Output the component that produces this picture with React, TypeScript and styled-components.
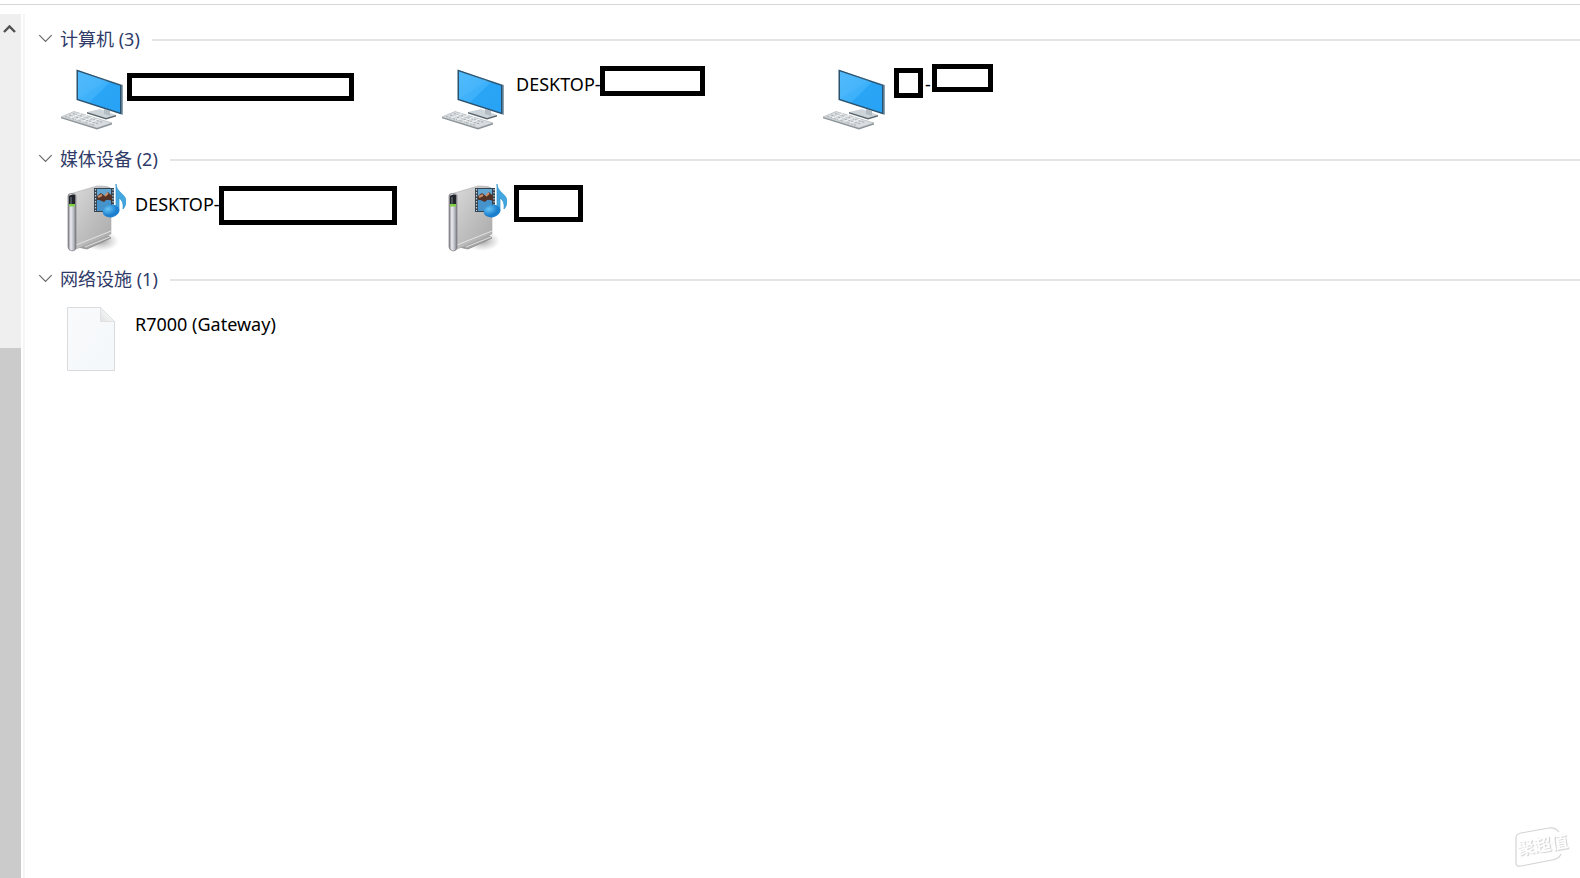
import React, { useState } from "react";
import styled, { createGlobalStyle } from "styled-components";

const GlobalStyle = createGlobalStyle`
  * { box-sizing: border-box; }
  body {
    margin: 0;
    background: #ffffff;
    color: #000000;
    font-family: "Noto Sans", "Noto Sans CJK SC", sans-serif;
    font-size: 18px;
    line-height: 24px;
  }
`;

const Page = styled.div`
  display: flex;
  flex-direction: column;
  min-height: 100vh;
`;

const TopRule = styled.div`
  height: 14px;
  padding-top: 4px;
  &::before {
    content: "";
    display: block;
    height: 1px;
    background: #d6d6d6;
  }
`;

const Body = styled.div`
  display: flex;
  flex: 1;
`;

const ScrollBar = styled.div`
  display: flex;
  flex-direction: column;
  width: 21px;
  background: #efefef;
`;

const ScrollButton = styled.button`
  display: flex;
  align-items: center;
  height: 30px;
  padding: 0 0 0 3px;
  border: 0;
  background: transparent;
`;

const TrackSpace = styled.div`
  flex: 304;
`;

const Thumb = styled.div`
  flex: 530;
  background: #cbcbcb;
`;

const Divider = styled.div`
  width: 2px;
  margin-left: 2px;
  background: #f5f5f5;
`;

const Content = styled.main`
  flex: 1;
  min-width: 0;
  padding: 13px 0 0 13px;
`;

const Group = styled.section`
  min-height: 120px;
`;

const GroupTitle = styled.h2`
  display: flex;
  align-items: center;
  gap: 12px;
  margin: 0;
  font-size: 18px;
  font-weight: 400;
  &::after {
    content: "";
    flex: 1;
    height: 2px;
    margin-top: 2px;
    background: #e5e5e5;
  }
`;

const GroupToggle = styled.button`
  display: flex;
  align-items: center;
  gap: 7px;
  padding: 0;
  border: 0;
  background: transparent;
  color: #2f3b68;
  font: inherit;
  line-height: 24px;
`;

const Tiles = styled.ul`
  display: flex;
  flex-wrap: wrap;
  margin: 0;
  padding: 9px 0 0 22px;
  list-style: none;
`;

const Tile = styled.li`
  position: relative;
  display: flex;
  gap: 9px;
  width: 381px;
  height: 84px;
  svg { flex: none; }
`;

const Label = styled.span`
  padding-top: 12px;
  white-space: pre;
`;

const Cover = styled.span<{ $x: number; $y: number; $w: number; $h: number }>`
  position: absolute;
  left: ${(p) => p.$x}px;
  top: ${(p) => p.$y}px;
  width: ${(p) => p.$w}px;
  height: ${(p) => p.$h}px;
  border: 5px solid #000000;
  background: #ffffff;
`;

const Stamp = styled.div`
  position: fixed;
  right: 8px;
  bottom: 8px;
  width: 60px;
  height: 44px;
`;

const StampText = styled.span`
  position: absolute;
  left: 5px;
  top: 7px;
  color: #ffffff;
  font-size: 17px;
  font-weight: 700;
  text-shadow: 1px 1px 1px #cfcfcf;
  transform: rotate(-9deg);
  white-space: nowrap;
`;

const Chevron = ({ open }: { open: boolean }) => (
  <svg width="15" height="10" viewBox="0 0 15 10" fill="none" aria-hidden="true">
    <path d={open ? "M1.3 1.2 7.5 7.4 13.7 1.2" : "M5 0 10 5 5 10"} stroke="#686868" strokeWidth="1.2" />
  </svg>
);

const ComputerIcon = () => (
  <svg width="66" height="76" viewBox="-1 -2 66 76" aria-hidden="true">
    <defs>
      <linearGradient id="screen" x1="0" y1="0" x2="1" y2="1">
        <stop offset="0" stopColor="#4db8fc" />
        <stop offset=".5" stopColor="#3cb0fa" />
        <stop offset=".52" stopColor="#2aa5f6" />
        <stop offset="1" stopColor="#28a2f4" />
      </linearGradient>
    </defs>
    <path d="M26 50 39 47 55 53 45 57Z" fill="#cdd5da" />
    <path d="M26 50 45 56 55 53v1.500L45 57.500 26 51.500Z" fill="#59656c" />
    <path d="m43 47 6 2v5l-6-2Z" fill="#b4bdc4" />
    <path d="m16 8 46 15v30L60 52Z" fill="#8ca2b0" />
    <path d="M15.500 7.500 60.500 23v29.500L15.500 38Z" fill="#2a526e" />
    <path d="m17 9.600 42 14.200v26.600L17 37Z" fill="url(#screen)" />
    <path d="m17 37 29-18.500L17 9.600Z" fill="#6fc8ff" opacity=".16" />
    <path d="M0 55 13 49.500 51 61 36 66Z" fill="#d9dde0" stroke="#b0b6ba" strokeWidth=".7" />
    <path d="m0 55 36 11 15-5v1.500l-15 5L0 56.300Z" fill="#8b9398" />
    <path d="m4 54.500 30 9M8 53l30 9M12 51.500l30 9" stroke="#a6adb1" strokeWidth="1" strokeDasharray="2.500 1" />
    <path d="m9 56 11-4.500m-5 6.300 11-4.500m-5 6.300 11-4.500m-5 6.300 11-4.500" stroke="#f6f7f8" strokeWidth=".9" />
  </svg>
);

const MediaIcon = () => (
  <svg width="66" height="76" viewBox="-1 0 66 76" aria-hidden="true">
    <defs>
      <linearGradient id="case" x1="0" y1="0" x2="1" y2="1">
        <stop offset="0" stopColor="#dcdcdc" />
        <stop offset=".5" stopColor="#c0c0c0" />
        <stop offset="1" stopColor="#a8a8a8" />
      </linearGradient>
      <linearGradient id="edge">
        <stop offset="0" stopColor="#77777c" />
        <stop offset=".35" stopColor="#ededf4" />
        <stop offset=".7" stopColor="#b9b9c2" />
        <stop offset="1" stopColor="#76767c" />
      </linearGradient>
      <radialGradient id="note" cx=".35" cy=".3">
        <stop offset="0" stopColor="#69c5f5" />
        <stop offset="1" stopColor="#1c80cf" />
      </radialGradient>
      <radialGradient id="shade">
        <stop offset="0" stopColor="#777" stopOpacity=".7" />
        <stop offset="1" stopColor="#999" stopOpacity="0" />
      </radialGradient>
    </defs>
    <ellipse cx="40" cy="61" rx="18" ry="10" fill="url(#shade)" />
    <path d="m17 67 28-13 5 4-24 11Z" fill="#a6a6a6" stroke="#808080" strokeWidth=".7" />
    <path d="m24 67 25-10" stroke="#dedede" />
    <path d="m9 14 27-8q14 0 14 3v45L13 70Z" fill="url(#case)" stroke="#ababab" strokeWidth=".6" />
    <path d="m15 65 35-14" stroke="#e4e4e4" strokeWidth="1" />
    <path d="M7 16q0-2.500 3-2.500 5 0 5 2.500v52q-1 3-4 3-4-1-4-4Z" fill="url(#edge)" stroke="#7d7d82" strokeWidth=".7" />
    <path d="M8 16q3-2.500 6-1v11H8Z" fill="#202329" />
    <path d="M10 17v7" stroke="#77828a" />
    <path d="M8 24h6v2.500H8Z" fill="#7ed044" />
    <path d="M33 8h20v24H33Z" fill="#34434f" />
    <path d="M36 9h14v9H36Z" fill="#62a7d1" />
    <path d="M36 20h14v11H36Z" fill="#4693cc" />
    <path d="m36 16 4-3 4 3 3-4 4 4v5l-5-2-3 3-7-3Z" fill="#543226" />
    <path d="m37 17 4-2m3 1 3-3" stroke="#c98e68" strokeWidth="2" />
    <path d="M34.500 9v22M52 9v22" stroke="#c8d0d5" strokeWidth="1.200" strokeDasharray="1.500 1.500" />
    <path d="M55 4c0 8 10 10 10 17q0 5-3 8 1-8-4-11v13h-3Z" fill="#43a6df" stroke="#3193cf" strokeWidth=".7" />
    <ellipse cx="50" cy="31" rx="8.500" ry="6.300" transform="rotate(-12 50 31)" fill="url(#note)" />
  </svg>
);

const FileIcon = () => (
  <svg width="66" height="76" viewBox="0 0 66 76" aria-hidden="true">
    <defs>
      <linearGradient id="paper" x1="0" y1="0" x2="1" y2="1">
        <stop offset="0" stopColor="#f9fafb" />
        <stop offset="1" stopColor="#f4f8fb" />
      </linearGradient>
      <linearGradient id="fold" x1="1" y1="0" x2="0" y2="1">
        <stop offset=".4" stopColor="#f7f7f7" />
        <stop offset="1" stopColor="#dfe0e1" />
      </linearGradient>
    </defs>
    <path d="M7.500 7.500h33l14 14v49h-47Z" fill="url(#paper)" stroke="#dadbdc" />
    <path d="m40.500 7.500 14 14h-14Z" fill="url(#fold)" stroke="#dadbdc" strokeWidth=".7" />
  </svg>
);

const icons = { computer: ComputerIcon, media: MediaIcon, file: FileIcon };

type Item = { label: string; covers: number[][] };
type GroupData = { name: string; icon: keyof typeof icons; items: Item[] };

const groups: GroupData[] = [
  {
    name: "计算机 (3)",
    icon: "computer",
    items: [
      { label: "", covers: [[67, 13, 227, 28]] },
      { label: "DESKTOP-", covers: [[159, 6, 105, 30]] },
      { label: "      -.", covers: [[72, 8, 29, 30], [110, 4, 61, 28]] },
    ],
  },
  {
    name: "媒体设备 (2)",
    icon: "media",
    items: [
      { label: "DESKTOP-", covers: [[159, 6, 178, 39]] },
      { label: "", covers: [[73, 5, 69, 37]] },
    ],
  },
  { name: "网络设施 (1)", icon: "file", items: [{ label: "R7000 (Gateway)", covers: [] }] },
];

const DeviceGroup = ({ name, icon, items }: GroupData) => {
  const [open, setOpen] = useState(true);
  const Icon = icons[icon];
  return (
    <Group>
      <GroupTitle>
        <GroupToggle aria-expanded={open} onClick={() => setOpen(!open)}>
          <Chevron open={open} />
          {name}
        </GroupToggle>
      </GroupTitle>
      {open && (
        <Tiles>
          {items.map((item, i) => (
            <Tile key={i}>
              <Icon />
              <Label>{item.label}</Label>
              {item.covers.map(([x, y, w, h]) => (
                <Cover key={x} $x={x} $y={y} $w={w} $h={h} />
              ))}
            </Tile>
          ))}
        </Tiles>
      )}
    </Group>
  );
};

export default function App() {
  return (
    <Page>
      <GlobalStyle />
      <TopRule />
      <Body>
        <ScrollBar>
          <ScrollButton aria-label="向上滚动">
            <svg width="13" height="10" viewBox="0 0 13 10" fill="none" aria-hidden="true">
              <path d="m1 8 5.500-5.500L12 8" stroke="#505050" strokeWidth="2.400" />
            </svg>
          </ScrollButton>
          <TrackSpace />
          <Thumb />
        </ScrollBar>
        <Divider />
        <Content>
          {groups.map((g) => (
            <DeviceGroup key={g.name} {...g} />
          ))}
        </Content>
      </Body>
      <Stamp>
        <svg width="60" height="44" viewBox="0 0 60 44" fill="none" aria-hidden="true">
          <path d="M47 6Q43 1 37 2L9 7Q4 8 4 12v25q0 4 5 3l31-6q7-1 9-6" stroke="#d4d4d4" strokeWidth="1.200" />
        </svg>
        <StampText>聚超值</StampText>
      </Stamp>
    </Page>
  );
}
